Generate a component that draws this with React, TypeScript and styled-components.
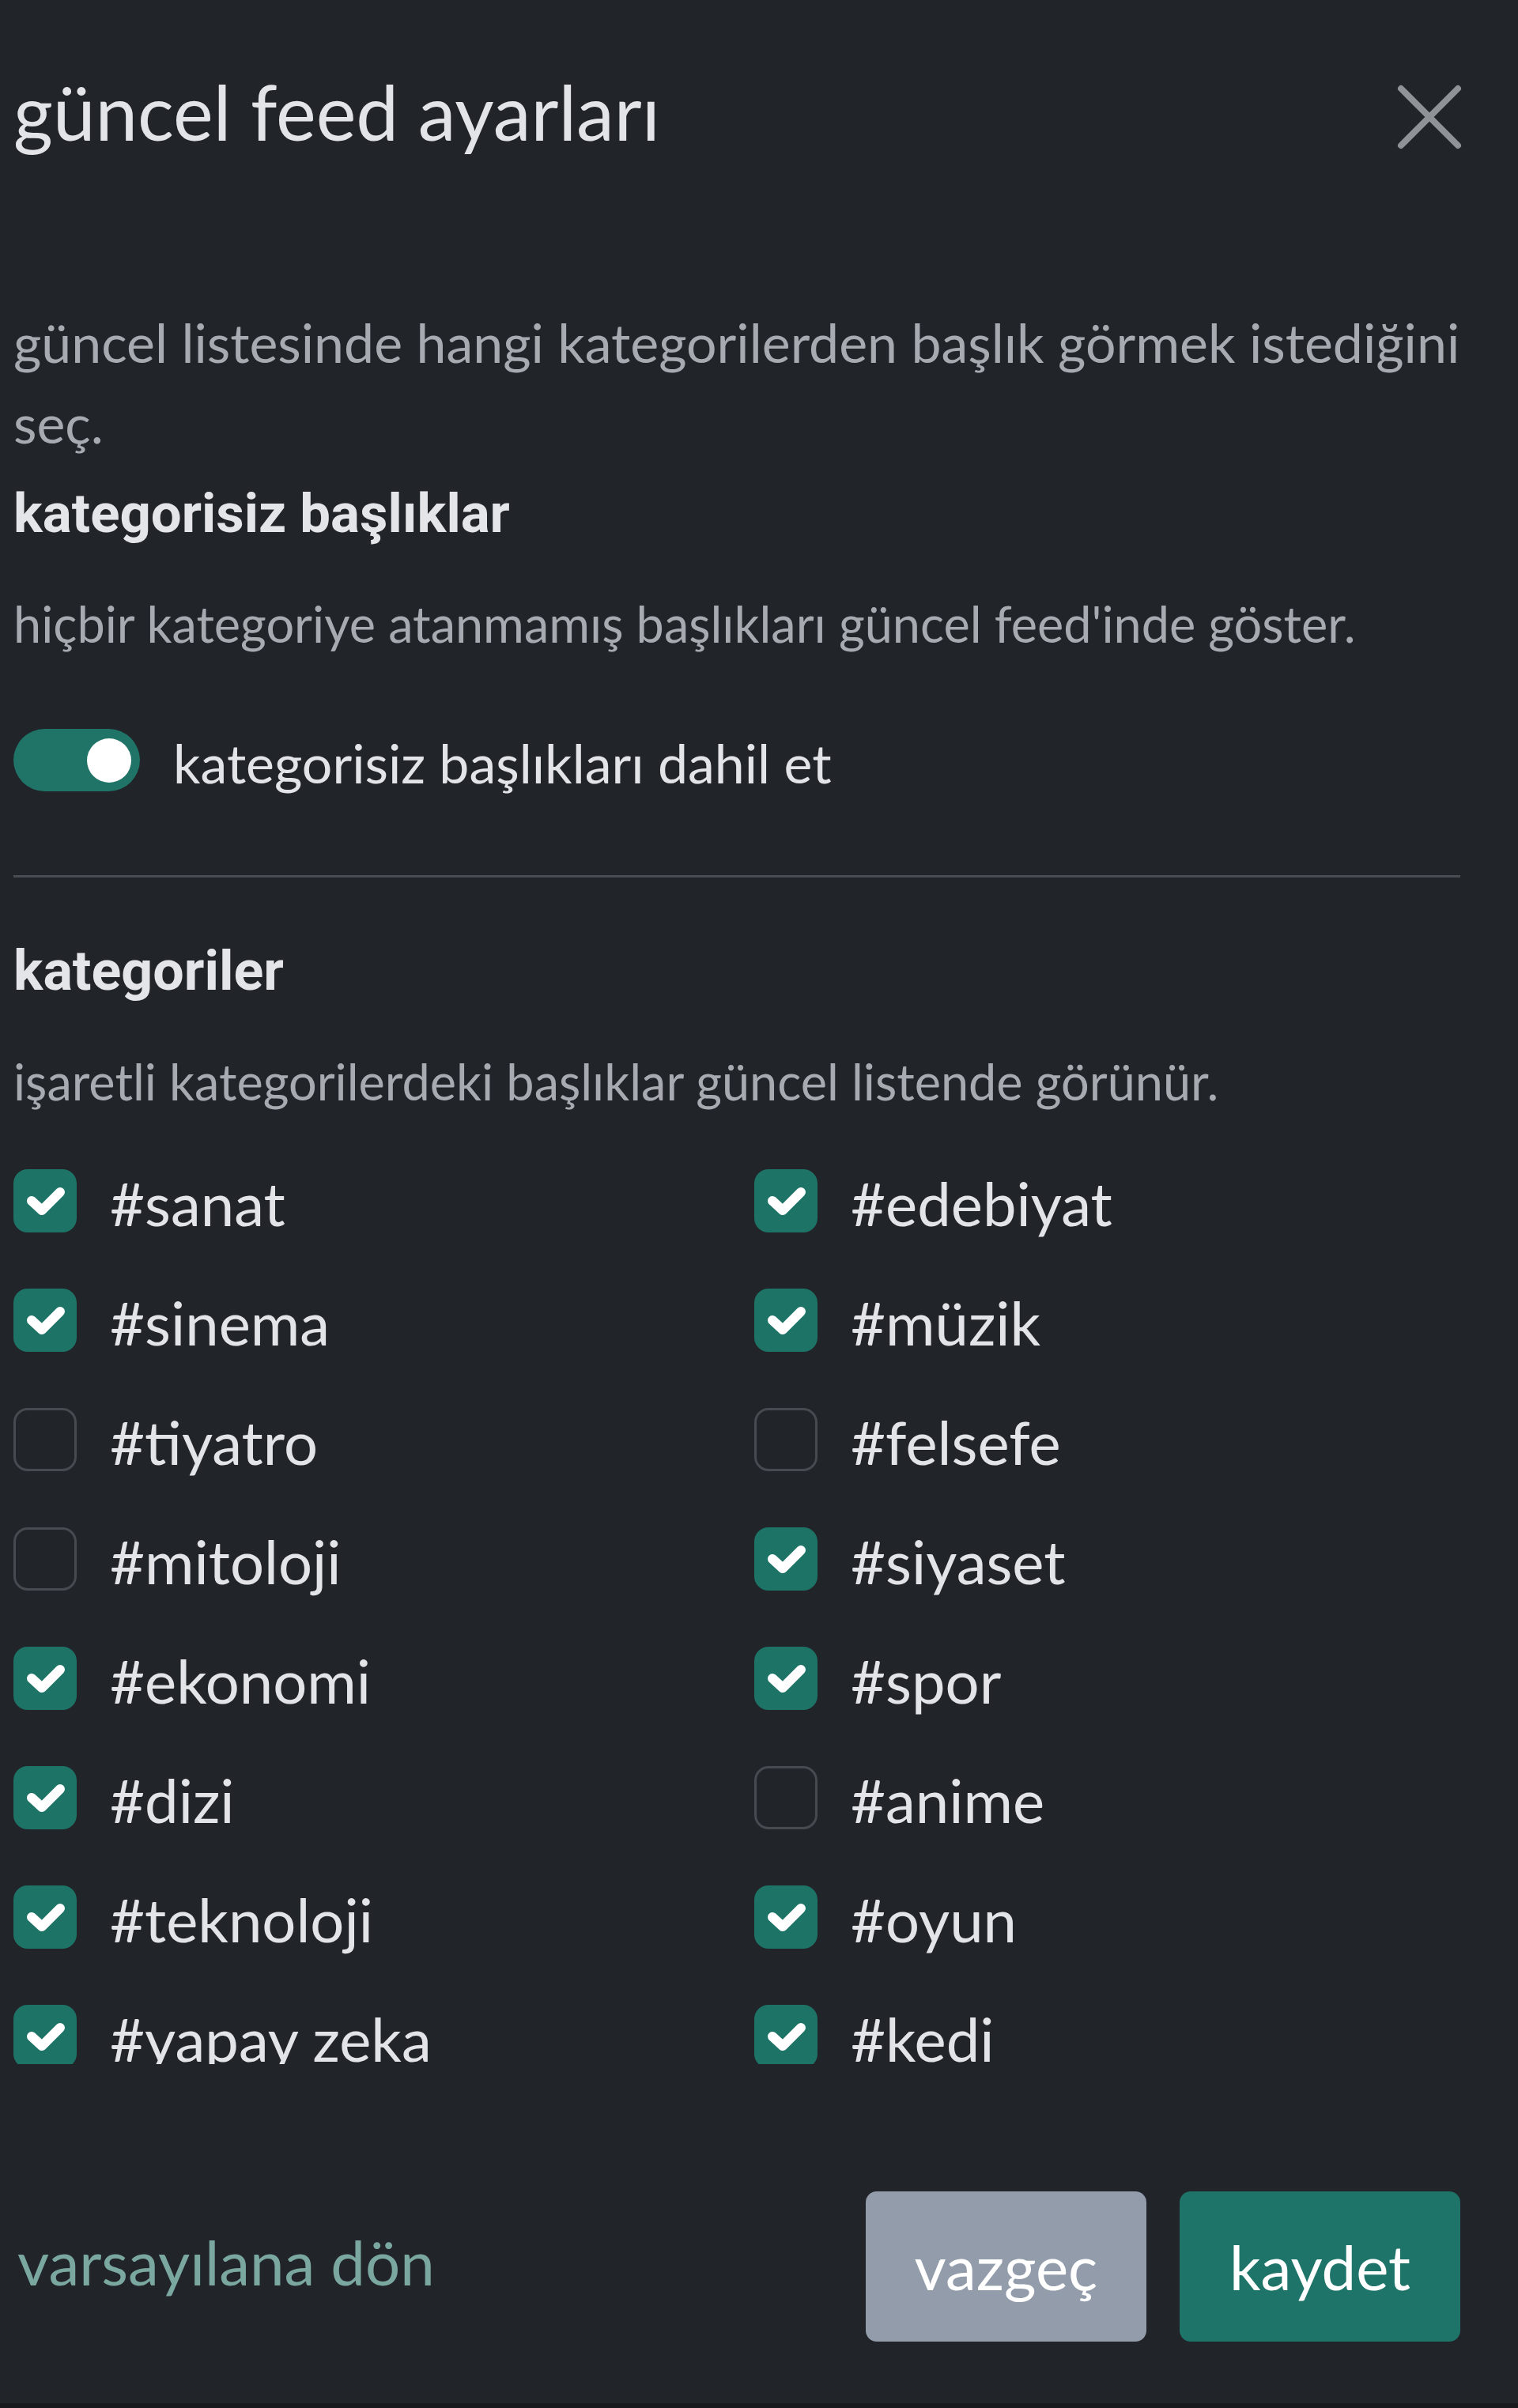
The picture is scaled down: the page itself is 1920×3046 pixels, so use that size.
import React, { useState } from "react";
import styled, { createGlobalStyle } from "styled-components";

const GlobalStyle = createGlobalStyle`
  html, body {
    margin: 0;
    padding: 0;
    background-color: #212429;
  }
  body {
    font-family: Lato, "Open Sans", sans-serif;
  }
  * {
    box-sizing: border-box;
  }
`;

type Category = { name: string; on: boolean };

const initialCategories: Category[] = [
  { name: "sanat", on: true },
  { name: "edebiyat", on: true },
  { name: "sinema", on: true },
  { name: "müzik", on: true },
  { name: "tiyatro", on: false },
  { name: "felsefe", on: false },
  { name: "mitoloji", on: false },
  { name: "siyaset", on: true },
  { name: "ekonomi", on: true },
  { name: "spor", on: true },
  { name: "dizi", on: true },
  { name: "anime", on: false },
  { name: "teknoloji", on: true },
  { name: "oyun", on: true },
  { name: "yapay zeka", on: true },
  { name: "kedi", on: true },
];

const App: React.FC = () => {
  const [includeUncategorized, setIncludeUncategorized] = useState(true);
  const [categories, setCategories] = useState<Category[]>(initialCategories);

  const toggleCategory = (index: number) => {
    setCategories(
      categories.map((c, i) => (i === index ? { ...c, on: !c.on } : c))
    );
  };

  return (
    <Modal>
      <GlobalStyle />
      <Header>
        <Title>güncel feed ayarları</Title>
        <CloseButton aria-label="kapat">
          <svg width="82" height="82" viewBox="0 0 82 82">
            <path
              d="M5 5 L77 77 M77 5 L5 77"
              stroke="#8f9296"
              strokeWidth="8"
              strokeLinecap="round"
            />
          </svg>
        </CloseButton>
      </Header>

      <Body>
        <Description $size={68}>
          güncel listesinde hangi kategorilerden başlık görmek istediğini seç.
        </Description>

        <SectionTitle $gap={21} $size={69}>kategorisiz başlıklar</SectionTitle>
        <Description $gap={45}>
          hiçbir kategoriye atanmamış başlıkları güncel feed'inde göster.
        </Description>

        <ToggleRow onClick={() => setIncludeUncategorized(!includeUncategorized)}>
          <Track $on={includeUncategorized}>
            <Knob />
          </Track>
          <ToggleLabel>kategorisiz başlıkları dahil et</ToggleLabel>
        </ToggleRow>

        <Divider />

        <SectionTitle $gap={75}>kategoriler</SectionTitle>
        <Description $gap={46}>
          işaretli kategorilerdeki başlıklar güncel listende görünür.
        </Description>

        <Grid>
          {categories.map((c, i) => (
            <CheckRow key={c.name} onClick={() => toggleCategory(i)}>
              <Box $on={c.on}>
                {c.on && (
                  <svg width="80" height="80" viewBox="0 0 80 80">
                    <path
                      d="M23 40 L36 52 L59 29"
                      fill="none"
                      stroke="#ffffff"
                      strokeWidth="12"
                      strokeLinecap="round"
                      strokeLinejoin="round"
                    />
                  </svg>
                )}
              </Box>
              <CheckLabel>#{c.name}</CheckLabel>
            </CheckRow>
          ))}
        </Grid>
      </Body>

      <Footer>
        <ResetLink>varsayılana dön</ResetLink>
        <Buttons>
          <Button $variant="muted">vazgeç</Button>
          <Button $variant="primary">kaydet</Button>
        </Buttons>
      </Footer>
      <BottomEdge />
    </Modal>
  );
};

export default App;

const Modal = styled.div`
  width: 1920px;
  height: 3046px;
  padding: 0 73px 0 17px;
  background-color: #212429;
  display: flex;
  flex-direction: column;
  position: relative;
  overflow: hidden;
`;

const Header = styled.div`
  padding-top: 83px;
  display: flex;
  justify-content: space-between;
  align-items: flex-start;
`;

const Title = styled.h1`
  margin: 0;
  font-family: Lato, sans-serif;
  font-weight: 400;
  font-size: 96px;
  line-height: 115px;
  color: #e2e4e8;
`;

const CloseButton = styled.button`
  margin-top: 24px;
  margin-right: -2px;
  width: 82px;
  height: 82px;
  padding: 0;
  border: none;
  background: none;
  display: flex;
`;

const Body = styled.div`
  margin-top: 184px;
  height: 2229px;
  overflow: hidden;
  flex-shrink: 0;
`;

const Description = styled.p<{ $gap?: number; $size?: number }>`
  margin: ${(p) => p.$gap ?? 0}px 0 0 0;
  font-family: Lato, sans-serif;
  font-size: ${(p) => p.$size ?? 63}px;
  line-height: 102px;
  color: #a7aab0;
`;

const SectionTitle = styled.h2<{ $gap: number; $size?: number }>`
  margin: ${(p) => p.$gap}px 0 0 0;
  font-family: Roboto, sans-serif;
  font-weight: 700;
  font-size: ${(p) => p.$size ?? 70}px;
  line-height: 86px;
  color: #e3e5e9;
`;

const ToggleRow = styled.div`
  margin-top: 79px;
  display: flex;
  align-items: center;
  gap: 42px;
  cursor: pointer;
`;

const Track = styled.div<{ $on: boolean }>`
  width: 160px;
  height: 79px;
  border-radius: 40px;
  padding: 0 11px;
  display: flex;
  align-items: center;
  justify-content: ${(p) => (p.$on ? "flex-end" : "flex-start")};
  background-color: ${(p) => (p.$on ? "#1f7367" : "#4a4e55")};
`;

const Knob = styled.div`
  width: 56px;
  height: 56px;
  border-radius: 50%;
  background-color: #ffffff;
`;

const ToggleLabel = styled.span`
  font-family: Lato, sans-serif;
  font-size: 68px;
  line-height: 79px;
  padding-top: 6px;
  color: #e2e4e8;
`;

const Divider = styled.div`
  margin-top: 103px;
  height: 3px;
  background-color: #484c53;
`;

const Grid = styled.div`
  margin-top: 60px;
  display: grid;
  grid-template-columns: 1fr 1fr;
  column-gap: 44px;
  row-gap: 71px;
`;

const CheckRow = styled.label`
  display: flex;
  align-items: center;
  gap: 42px;
  height: 80px;
  cursor: pointer;
`;

const Box = styled.span<{ $on: boolean }>`
  width: 80px;
  height: 80px;
  flex-shrink: 0;
  border-radius: 18px;
  display: flex;
  background-color: ${(p) => (p.$on ? "#1e7367" : "transparent")};
  border: ${(p) => (p.$on ? "none" : "3px solid #464a51")};
`;

const CheckLabel = styled.span`
  font-family: Lato, sans-serif;
  font-size: 76px;
  line-height: 80px;
  padding-top: 6px;
  color: #e2e4e8;
`;

const Footer = styled.div`
  margin-top: 161px;
  display: flex;
  align-items: center;
  justify-content: space-between;
`;

const ResetLink = styled.a`
  padding-left: 5px;
  padding-bottom: 12px;
  font-family: Lato, sans-serif;
  font-size: 78px;
  color: #7aa7a0;
  text-decoration: none;
  cursor: pointer;
`;

const Buttons = styled.div`
  display: flex;
  gap: 42px;
`;

const Button = styled.button<{ $variant: "muted" | "primary" }>`
  width: 355px;
  height: 190px;
  border: none;
  border-radius: 14px;
  font-family: Lato, sans-serif;
  font-size: 78px;
  color: #ffffff;
  background-color: ${(p) => (p.$variant === "primary" ? "#1e7468" : "#939cab")};
  cursor: pointer;
`;

const BottomEdge = styled.div`
  position: absolute;
  left: 0;
  right: 0;
  bottom: 0;
  height: 6px;
  background-color: #17191c;
`;
